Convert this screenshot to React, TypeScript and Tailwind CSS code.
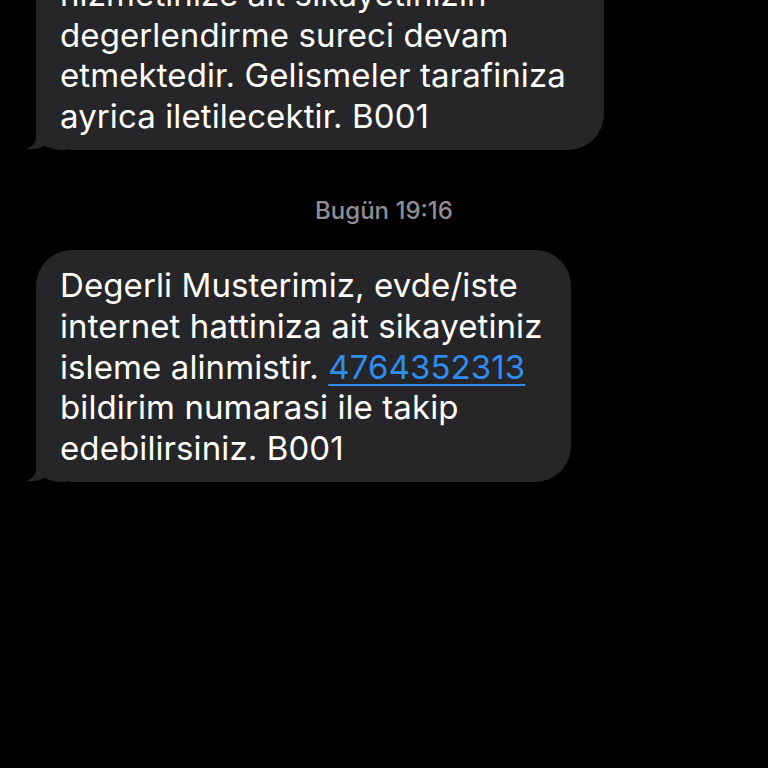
import React from 'react';

function Tail() {
  return (
    <svg
      className="absolute -left-[10px] bottom-0"
      width="40"
      height="40"
      viewBox="0 0 40 40"
    >
      <path
        d="M10 0 L10 27 C10 33 6.5 36.5 0.5 38.8 C7 40.2 14 38.6 18.5 35.2 C23 38.6 30 40 40 40 L40 0 Z"
        fill="#262628"
      />
    </svg>
  );
}

function Bubble({ width, lines, className = '' }: { width: string; lines: React.ReactNode[]; className?: string }) {
  return (
    <div className={`relative bg-[#262628] rounded-[36px] pl-6 pr-4 pt-[15px] pb-[14px] ${width} ${className}`}>
      <Tail />
      <div className="relative text-white text-[33px] leading-[40.6px] tracking-[0.1px]">
        {lines.map((l, i) => (
          <div key={i} className="whitespace-nowrap">
            {l}
          </div>
        ))}
      </div>
    </div>
  );
}

export default function App() {
  return (
    <div
      className="h-[768px] w-[768px] overflow-hidden bg-black pl-9"
      style={{ fontFamily: 'Inter, "Noto Sans", sans-serif' }}
    >
      <Bubble
        width="w-[568px]"
        className="-mt-[41px]"
        lines={[
          'hizmetinize ait sikayetinizin',
          'degerlendirme sureci devam',
          'etmektedir. Gelismeler tarafiniza',
          'ayrica iletilecektir. B001',
        ]}
      />
      <div className="mt-[47px] h-[28px] pr-9 text-center text-[24px] leading-[28px] font-medium text-[#8e8e93]">
        Bugün 19:16
      </div>
      <Bubble
        width="w-[535px]"
        className="mt-[25px]"
        lines={[
          'Degerli Musterimiz, evde/iste',
          'internet hattiniza ait sikayetiniz',
          <>
            isleme alinmistir.{' '}
            <span className="text-[#2f8cf0] underline decoration-2 underline-offset-[5px]">4764352313</span>
          </>,
          'bildirim numarasi ile takip',
          'edebilirsiniz. B001',
        ]}
      />
    </div>
  );
}
